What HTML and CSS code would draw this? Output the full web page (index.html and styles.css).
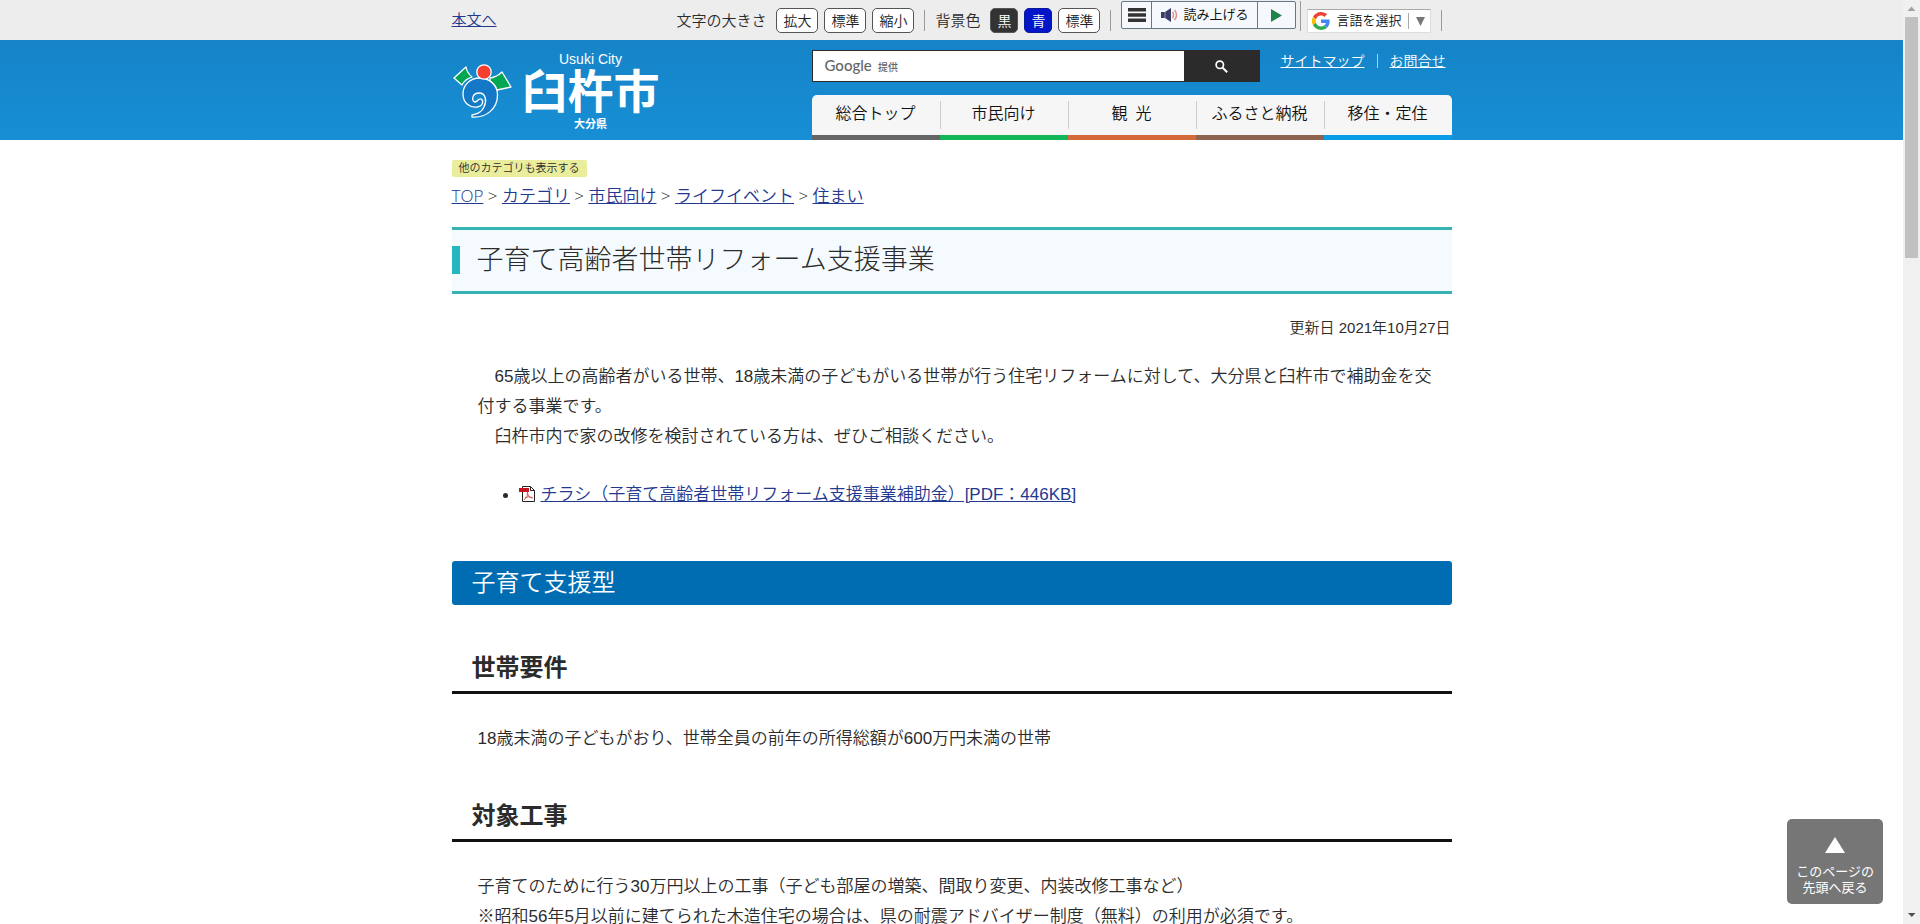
FILE: index.html
```html
<!DOCTYPE html>
<html lang="ja">
<head>
<meta charset="utf-8">
<meta name="viewport" content="width=device-width, initial-scale=1">
<title>子育て高齢者世帯リフォーム支援事業 - 臼杵市</title>
<link rel="stylesheet" href="styles.css">
</head>
<body>
<div class="page">
  <div class="utility">
    <div class="wrap utility-row">
      <a class="skip" href="#main">本文へ</a>
      <div class="tools">
        <div class="group group-size">
          <span class="label">文字の大きさ</span>
          <button type="button" class="chip">拡大</button>
          <button type="button" class="chip">標準</button>
          <button type="button" class="chip">縮小</button>
        </div>
        <div class="group group-color">
          <span class="label">背景色</span>
          <button type="button" class="chip chip-black">黒</button>
          <button type="button" class="chip chip-blue">青</button>
          <button type="button" class="chip">標準</button>
        </div>
        <div class="group group-reader">
          <div class="reader">
            <button type="button" class="reader-menu" aria-label="メニュー"><svg width="18" height="14" viewBox="0 0 18 14"><path d="M0 0h18v3.6H0zM0 5.2h18v3.6H0zM0 10.4h18V14H0z" fill="#333"/></svg></button>
            <button type="button" class="reader-speak"><svg width="18" height="14" viewBox="0 0 18 14"><path d="M0 4h4l6-4v14l-6-4H0z" fill="#3a3c68"/><path d="M4 4v6" stroke="#8b8fb5"/><path d="M11.5 4q2 3 0 6M13.5 2q4 5 0 10" fill="none" stroke="#e58a83" stroke-width="1.4"/></svg>読み上げる</button>
            <button type="button" class="reader-play" aria-label="再生"><svg width="11" height="13" viewBox="0 0 11 13"><path d="M0 0l11 6.5L0 13z" fill="#1e8449"/></svg></button>
          </div>
        </div>
        <div class="group group-lang">
          <button type="button" class="lang" aria-haspopup="true"><svg width="18" height="18" viewBox="0 0 48 48"><path fill="#ea4335" d="M24 9.5c3.5 0 6.700 1.200 9.200 3.600l6.900-6.900C35.900 2.400 30.500 0 24 0 14.600 0 6.500 5.400 2.600 13.200l8 6.200C12.400 13.700 17.700 9.500 24 9.500z"/><path fill="#4285f4" d="M47 24.600c0-1.600-.2-3.100-.4-4.600H24v9h12.900c-.6 3-2.200 5.500-4.700 7.200l7.700 6C44.400 38 47 31.800 47 24.600z"/><path fill="#fbbc05" d="M10.500 28.600a14.500 14.500 0 0 1 0-9.200l-8-6.200a24 24 0 0 0 0 21.600z"/><path fill="#34a853" d="M24 48c6.500 0 11.900-2.100 15.900-5.800l-7.700-6c-2.200 1.500-4.900 2.300-8.200 2.300-6.300 0-11.600-4.200-13.500-9.900l-8 6.200C6.500 42.600 14.600 48 24 48z"/></svg><span>言語を選択</span><svg class="lang-arrow" width="17" height="16" viewBox="0 0 17 16"><path d="M.5 0v16" stroke="#aaa"/><path d="M8 4h9l-4.500 9z" fill="#777"/></svg></button>
        </div>
      </div>
    </div>
  </div>

  <header class="site-header">
    <div class="wrap header-row">
      <a class="brand" href="#">
        <svg class="emblem" width="59" height="56" viewBox="0 0 59 56"><g stroke="#fff" stroke-width="1.300" stroke-linejoin="round"><path d="M1 14L13 3q1 6 6 10-7 2-10 8z" fill="#00a651"/><path d="M37 14q7-1 12-6l9 15-14 3q-2-6-7-9z" fill="#00a651"/><path d="M19 53C33 54 44.500 45 44.500 31C44.500 21 36 14 27 14C17 14 10 21 10 30C10 39 17 44 24 43C30 42 31 37 28 35C25 34 25 38 22 38C18 37 19 29 26 29C33 29 34 37 31 43C29 48 25 50 19 51Z" fill="#1478c6"/><circle cx="31" cy="8" r="7.200" fill="#f43e2f"/></g></svg>
        <span class="brand-text">
          <span class="brand-en">Usuki City</span>
          <span class="brand-ja">臼杵市</span>
          <span class="brand-pref">大分県</span>
        </span>
      </a>
      <div class="header-right">
        <div class="search-row">
          <form class="search" role="search" onsubmit="return false">
            <label class="search-label" for="q"><b>Google</b> 提供</label>
            <input id="q" class="search-input" type="text">
            <button class="search-button" type="submit" aria-label="検索"><svg width="13" height="13" viewBox="0 0 13 13"><circle cx="4.800" cy="4.800" r="3.700" fill="none" stroke="#fff" stroke-width="1.700"/><path d="M7.700 7.700l4.500 4.500" stroke="#fff" stroke-width="2"/></svg></button>
          </form>
          <div class="help-links"><a href="#">サイトマップ</a><a href="#">お問合せ</a></div>
        </div>
        <nav class="gnav">
          <a class="gnav-top" href="#">総合トップ</a>
          <a class="gnav-citizen" href="#">市民向け</a>
          <a class="gnav-tour" href="#">観&ensp;光</a>
          <a class="gnav-tax" href="#">ふるさと納税</a>
          <a class="gnav-move" href="#">移住・定住</a>
        </nav>
      </div>
    </div>
  </header>

  <main class="wrap" id="main">
    <button type="button" class="more-cats">他のカテゴリも表示する</button>
    <nav class="crumbs"><a href="#">TOP</a> &gt; <a href="#">カテゴリ</a> &gt; <a href="#">市民向け</a> &gt; <a href="#">ライフイベント</a> &gt; <a href="#">住まい</a></nav>
    <h1 class="title">子育て高齢者世帯リフォーム支援事業</h1>
    <p class="updated">更新日 2021年10月27日</p>
    <p class="text">　65歳以上の高齢者がいる世帯、18歳未満の子どもがいる世帯が行う住宅リフォームに対して、大分県と臼杵市で補助金を交付する事業です。<br>　臼杵市内で家の改修を検討されている方は、ぜひご相談ください。</p>
    <ul class="files">
      <li><svg class="pdf" width="16" height="16" viewBox="0 0 16 16"><path d="M3.500.5h8l4 4v11h-12z" fill="#fff" stroke="#222"/><path d="M11.500.5v4h4" fill="none" stroke="#222"/><path d="M0 2h10v4H0z" fill="#c4161c"/><path d="M8.500 6q1 5-3.500 8M8.500 7q1 5 5.500 5M6 11.500q4-1.500 7 0" fill="none" stroke="#d9534f"/></svg><a href="#">チラシ（子育て高齢者世帯リフォーム支援事業補助金）[PDF：446KB]</a></li>
    </ul>
    <h2 class="section">子育て支援型</h2>
    <h3 class="sub">世帯要件</h3>
    <p class="text">18歳未満の子どもがおり、世帯全員の前年の所得総額が600万円未満の世帯</p>
    <h3 class="sub">対象工事</h3>
    <p class="text">子育てのために行う30万円以上の工事（子ども部屋の増築、間取り変更、内装改修工事など）<br>※昭和56年5月以前に建てられた木造住宅の場合は、県の耐震アドバイザー制度（無料）の利用が必須です。</p>
  </main>
</div>
<div class="scrollbar" aria-hidden="true">
  <svg width="17" height="17" viewBox="0 0 17 17"><path d="M4.500 11l4-4.500 4 4.500z" fill="#a3a3a3"/></svg>
  <div class="thumb"></div>
  <svg width="17" height="17" viewBox="0 0 17 17"><path d="M5 6h7.500l-3.700 4z" fill="#505050"/></svg>
</div>
<a class="to-top" href="#"><svg width="20" height="16" viewBox="0 0 20 16"><path d="M10 0l10 16H0z" fill="#fff"/></svg><span>このページの<br>先頭へ戻る</span></a>
</body>
</html>
```

FILE: styles.css
```css
* { box-sizing: border-box; }

body {
  margin: 0;
  height: 100vh;
  overflow: hidden;
  display: flex;
  background: #fff;
  color: #2b2b2b;
  font-family: "Liberation Sans", "Noto Sans CJK JP", sans-serif;
  font-size: 17px;
  font-weight: 350;
  line-height: 30px;
}

button, input { font: inherit; color: inherit; }
button { cursor: pointer; }
a { color: #23388f; }
svg { flex: none; }

.page { flex: 1; min-width: 0; overflow: hidden; }
.wrap { max-width: 1000px; margin: 0 auto; }

/* Utility bar */
.utility { background: #ededed; height: 40px; font-size: 15px; }
.utility-row { display: flex; justify-content: space-between; padding-right: 10px; }
.skip { line-height: 20px; padding-top: 10px; }
.tools { display: flex; }
.group { display: flex; align-items: center; height: 21px; margin-top: 10px; border-right: 1px solid #999; }
.label { line-height: 20px; }
.group-size { gap: 6px; padding-right: 10px; }
.group-size .label { margin-right: 4px; }
.group-color { gap: 6px; padding: 0 10px; }
.group-color .label { margin-right: 4px; }
.chip {
  height: 25px;
  padding: 0 6px;
  border: 1px solid #555;
  border-radius: 5px;
  background: #fff;
  color: #222;
  font-size: 14px;
  line-height: 20px;
}
.chip-black { background: #333; color: #fff; }
.chip-blue { background: #0516c8; border-color: #0a1a9c; color: #fff; }
.group-reader { align-items: flex-start; padding: 0 4px 0 10px; margin-top: 1px; height: 30px; }
.reader { display: flex; height: 28px; border: 1px solid #667788; border-radius: 2px; background: #f5f9fd; }
.reader button {
  display: flex;
  align-items: center;
  justify-content: center;
  gap: 4px;
  padding: 0;
  border: 0;
  background: none;
  font-size: 13px;
  font-weight: 400;
  line-height: 20px;
  color: #111;
}
.reader .reader-menu { width: 29px; }
.reader .reader-speak { width: 107px; border: solid #667788; border-width: 0 1px; }
.reader .reader-play { width: 37px; }
.group-lang { padding: 0 10px 0 6px; }
.lang {
  display: flex;
  align-items: center;
  height: 24px;
  padding: 0 5px 0 4px;
  gap: 6px;
  border: 1px solid #ddd;
  border-top-color: #aaa;
  background: #fff;
  color: #111;
  font-size: 13px;
  line-height: 20px;
}

/* Header */
.site-header { background: linear-gradient(#1683c7, #178fd5); }
.header-row { display: flex; justify-content: space-between; height: 100px; }
.brand { display: flex; color: #fff; text-decoration: none; gap: 10px; padding: 10px 0 0 1px; }
.emblem { margin-top: 14px; }
.brand-text { display: flex; flex-direction: column; align-items: center; }
.brand-en { font-size: 14px; line-height: 18px; }
.brand-ja { font-size: 46px; font-weight: 700; line-height: 48px; }
.brand-pref { font-size: 11px; font-weight: 700; line-height: 16px; }
.header-right { width: 640px; padding-top: 10px; }
.search-row { display: flex; justify-content: space-between; }
.search { display: flex; width: 448px; height: 32px; border: 1px solid #2b2b2b; background: #fff; }
.search-label { padding: 0 12px; color: #666; font: 500 10px/30px "Noto Sans CJK JP", sans-serif; }
.search-label b { margin-right: 4px; font: 500 15px/28px "Lato", sans-serif; }
.search-input { flex: 1; min-width: 0; border: 0; padding: 0; outline: 0; background: none; }
.search-button { width: 75px; border: 0; background: #2b2b2b; display: flex; align-items: center; justify-content: center; }
.help-links { display: flex; align-items: center; height: 22px; font-size: 14px; line-height: 20px; padding-right: 6px; }
.help-links a { color: #fff; }
.help-links a:first-child::after { content: ""; display: inline-block; height: 14px; margin: 0 12px; border-left: 1px solid #a8d2ee; vertical-align: -2px; }
.gnav { display: grid; grid-template-columns: repeat(5, 1fr); margin-top: 13px; height: 45px; border-radius: 5px 5px 0 0; overflow: hidden; background: #f6f6f6; }
.gnav a { position: relative; border-bottom: 5px solid; color: #111; font-size: 16px; line-height: 38px; text-align: center; text-decoration: none; }
.gnav a + a::before { content: ""; position: absolute; left: 0; top: 6px; height: 28px; border-left: 1px solid #ccc; }
.gnav .gnav-top { border-color: #666; }
.gnav .gnav-citizen { border-color: #12b658; }
.gnav .gnav-tour { border-color: #d4693a; }
.gnav .gnav-tax { border-color: #8d6450; }
.gnav .gnav-move { border-color: #0b9ce8; }

/* Article */
.more-cats { display: block; margin-top: 20px; padding: 0 7px; border: 0; border-radius: 2px; background: #e9ed9c; font-size: 11px; line-height: 17px; }
.crumbs { margin-top: 4px; font-family: "Open Sans", "Noto Sans CJK JP", sans-serif; }
.title {
  display: flex;
  align-items: center;
  margin: 16px 0 0;
  height: 67px;
  padding-bottom: 2px;
  border: solid #35b3b5;
  border-width: 3px 0;
  background: #f4fafd;
  font-size: 27px;
  font-weight: 300;
  line-height: 40px;
}
.title::before { content: ""; width: 8px; height: 28px; margin-right: 17px; background: #25b7bd; }
.updated { margin: 19px 1px 0 0; text-align: right; font-size: 15px; }
.text { margin: 19px 12px 0 26px; }
.files { margin: 28px 0 0; padding-left: 67px; }
.files li::marker { font-size: 16px; }
.pdf { margin-right: 6px; vertical-align: -2px; }
.section { margin: 51px 0 0; padding: 4px 20px; border-radius: 3px; background: #006db3; color: #fff; font-size: 24px; font-weight: 350; line-height: 36px; }
.sub { margin: 45px 0 0; padding: 0 20px 5px; border-bottom: 3px solid #111; font-size: 24px; font-weight: 700; line-height: 36px; }
.sub + .text { margin-top: 30px; }
.text + .sub { margin-top: 44px; }

/* Floating controls */
.scrollbar { display: flex; flex-direction: column; width: 17px; background: #f0f0f0; }
.thumb { width: 13px; height: 241px; margin: 0 auto auto 2px; background: #c1c1c1; }
.to-top {
  position: fixed;
  right: 37px;
  bottom: 20px;
  display: flex;
  flex-direction: column;
  align-items: center;
  gap: 11px;
  padding: 18px 9px 8px;
  border-radius: 5px;
  background: #767676;
  color: #fff;
  font-size: 13px;
  line-height: 16px;
  font-weight: 400;
  text-align: center;
  text-decoration: none;
}
```
